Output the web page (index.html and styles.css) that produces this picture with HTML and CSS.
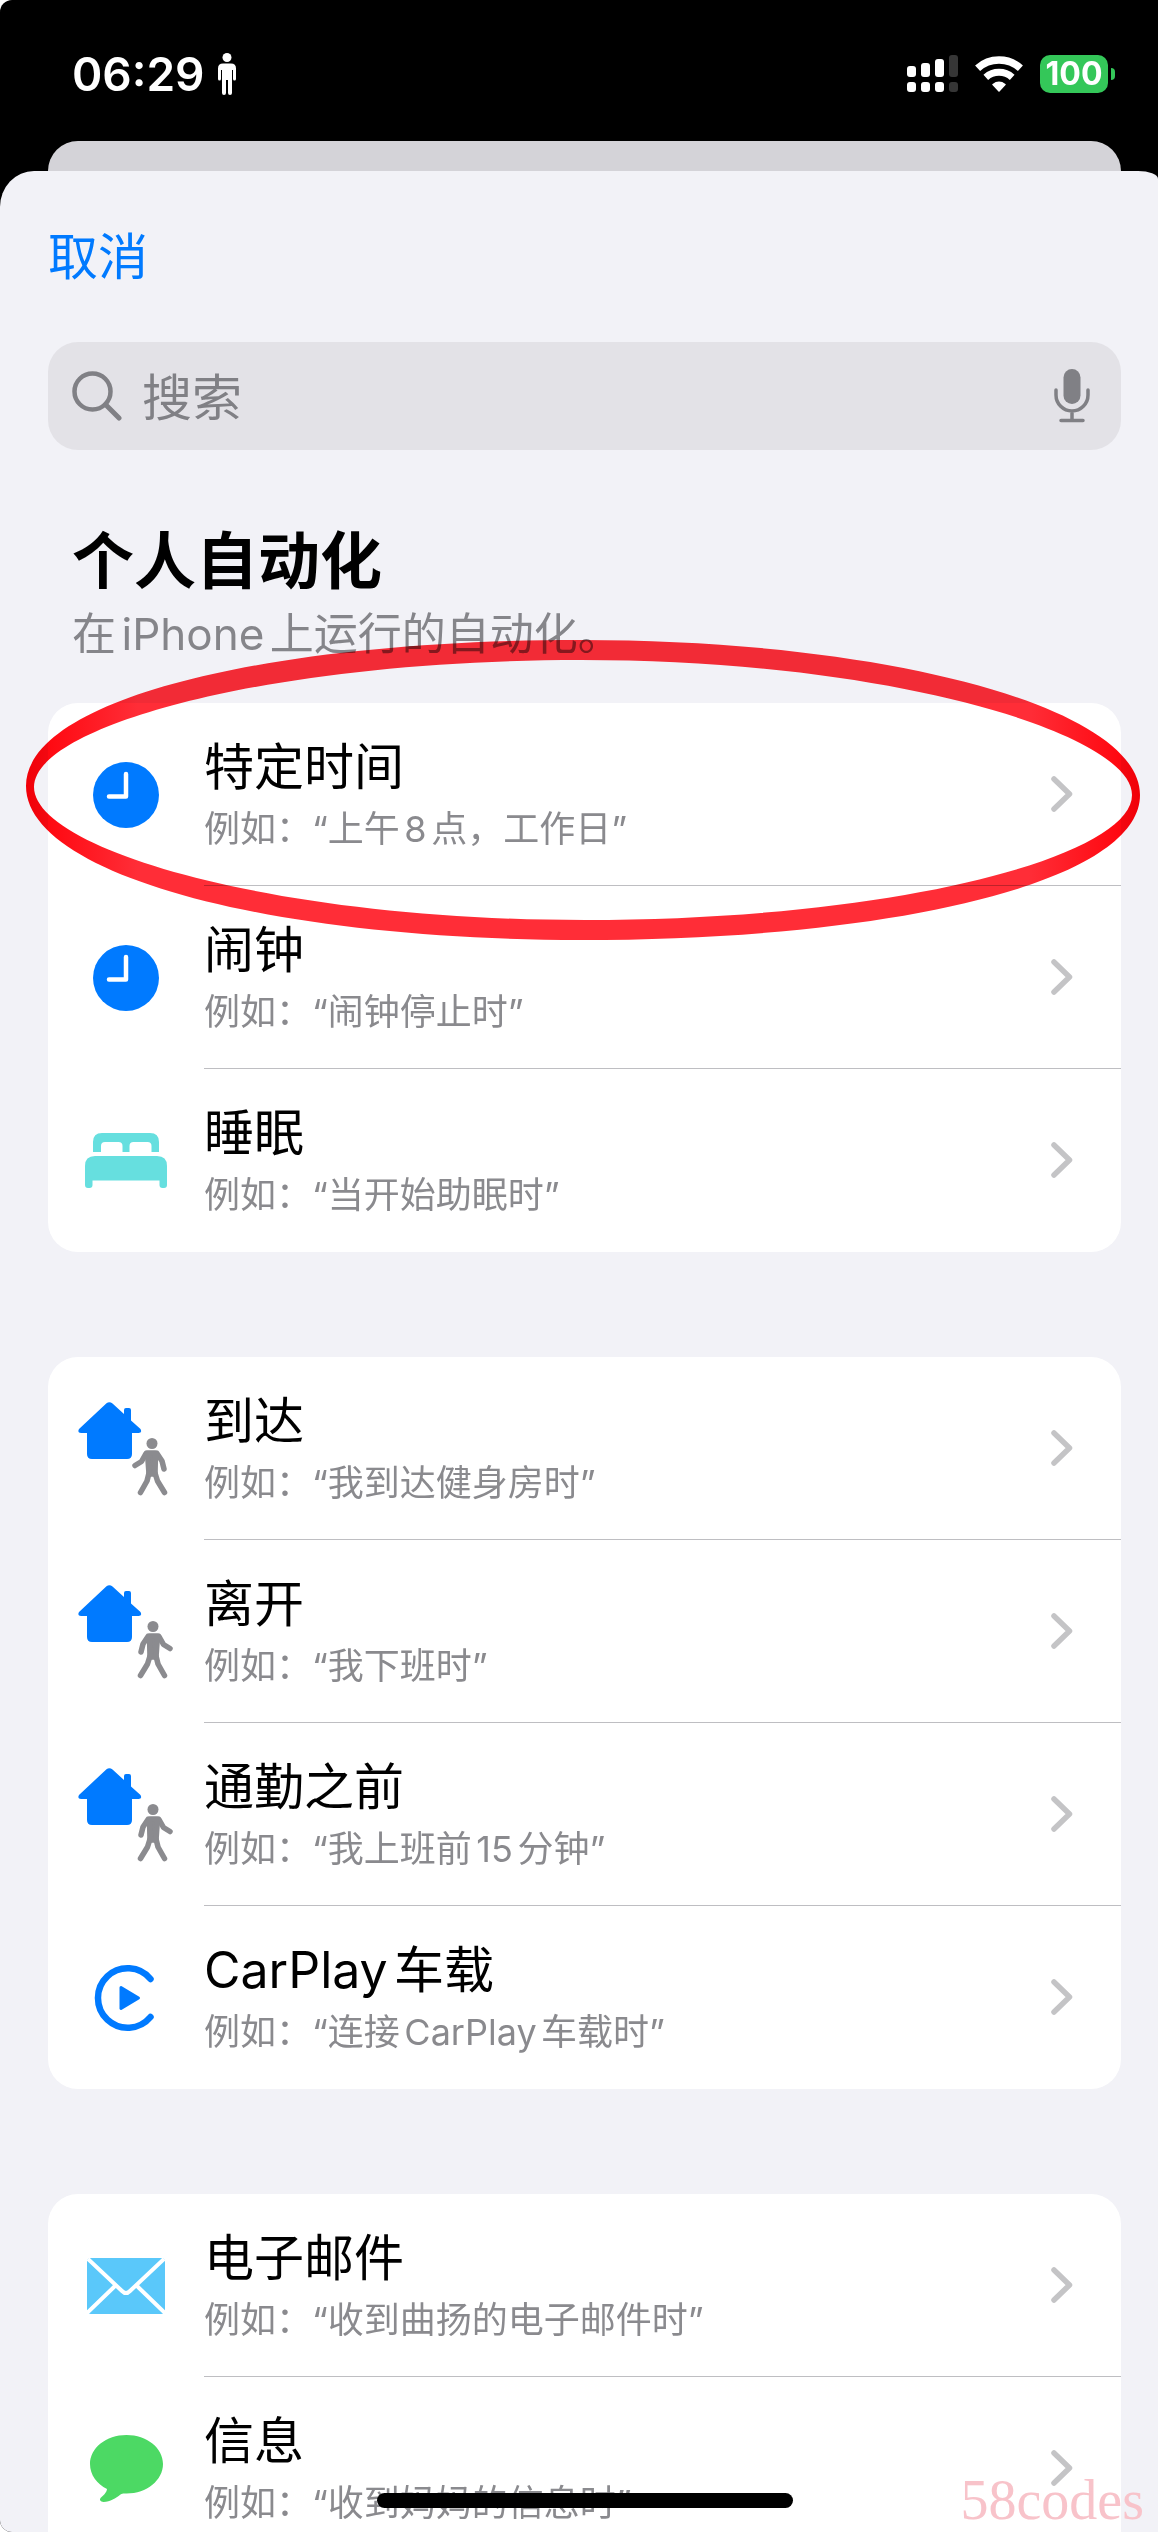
FILE: index.html
```html
<!DOCTYPE html>
<html lang="zh-CN">
<head>
<meta charset="utf-8">
<meta name="viewport" content="width=device-width">
<title>个人自动化</title>
<link rel="stylesheet" href="styles.css">
</head>
<body>
<svg class="defs" aria-hidden="true">
  <symbol id="clock" viewBox="0 0 66 66"><circle cx="33" cy="33" r="33" fill="#007aff"/><path d="M33 12v22.500H16" fill="none" stroke="#fff" stroke-width="4.500" stroke-linecap="round" stroke-linejoin="round"/></symbol>
  <symbol id="bed" viewBox="0 0 82 55"><path fill="#66dfdf" d="M8 19V9q0-9 9-9h48q9 0 9 9v10h-7.500v-6q0-4-4-4H48.500q-4 0-4 4v6h-7v-6q0-4-4-4H20q-4 0-4 4v6zM0 33q0-10 10-10h62q10 0 10 10v19q0 3-3 3h-1.500q-3 0-3-3v-4.500h-67V52q0 3-3 3H3q-3 0-3-3z"/></symbol>
  <symbol id="house" viewBox="0 0 64 58"><path fill="#007aff" d="M28.500 1.200q3-2.200 6 .3L46 12V8q0-2 2-2h3q2 0 2 2v10.500l9.500 8.500q2 4-2 4H54v21q0 5-5 5H14q-5 0-5-5V31H3q-4 0-2-4z"/></symbol>
  <symbol id="walker" viewBox="0 0 36 58"><g fill="none" stroke="#8b8b8f" stroke-width="5.500" stroke-linecap="round" stroke-linejoin="round"><path d="M14 15.500l-4.500 8L3 27.500M25 15.500l5 7.500 2 8M17 35l-2 8-6.500 11.500M23 35l2.500 8 7 11.500"/><path d="M15.500 15h8l-.5 21h-6z" fill="#8b8b8f"/></g><circle cx="20" cy="5.500" r="5.500" fill="#8b8b8f"/></symbol>
  <symbol id="carplay" viewBox="0 0 66 66"><path d="M57.500 14A29.700 29.700 0 1 0 57.500 52" fill="none" stroke="#007aff" stroke-width="6.500" stroke-linecap="round"/><path d="M28 22.500l17.500 10.500L28 43.500z" fill="#007aff" stroke="#007aff" stroke-width="3" stroke-linejoin="round"/></symbol>
  <symbol id="mail" viewBox="0 0 78 56"><rect width="78" height="56" rx="4" fill="#5ac8fa"/><path d="M1 1l34 32q4 4 8 0L77 1M0 55l28-27M78 55L50 28" fill="none" stroke="#fff" stroke-width="4"/></symbol>
  <symbol id="bubble" viewBox="0 0 73 67"><path fill="#4cd964" d="M36.500 0C57 0 73 13 73 29S57 58.500 36.500 58.500c-2 0-4-.5-6 1-5 4-10 7-17 7.500q-5-1-3-4c3-3 6-5 6.500-9C7 49 0 40 0 29 0 13 16 0 36.500 0z"/></symbol>
  <symbol id="chevron" viewBox="0 0 22 36"><path d="M3 3l15.500 15L3 33" fill="none" stroke="#c4c4c6" stroke-width="5.500" stroke-linecap="round" stroke-linejoin="round"/></symbol>
</svg>

<div class="phone">
  <header class="status">
    <div class="status-side">
      <time class="clock-text">06:29</time>
      <svg width="20" height="42" viewBox="0 0 20 42" fill="#fff" aria-hidden="true"><circle cx="10" cy="4.500" r="4.500"/><path d="M6 10.500h8q5 0 5 5V26q0 1.500-1.500 1.500T16 26v-9h-1v23q0 2-2 2t-2-2V27H9v13q0 2-2 2t-2-2V17H4v9q0 1.500-1.500 1.500T1 26V15.500q0-5 5-5z"/></svg>
    </div>
    <div class="status-side status-right">
      <svg width="51" height="38" viewBox="0 0 51 38" fill="#fff" aria-hidden="true"><rect y="11" width="9" height="11" rx="3"/><rect x="14" y="8" width="9" height="14" rx="3"/><rect x="28" y="4" width="9" height="18" rx="3"/><rect y="27" width="9" height="10" rx="3"/><rect x="14" y="27" width="9" height="10" rx="3"/><rect x="28" y="27" width="9" height="10" rx="3"/><g fill="#363636"><rect x="42" width="9" height="22" rx="3"/><rect x="42" y="27" width="9" height="10" rx="3"/></g></svg>
      <svg width="48" height="36" viewBox="0 0 48 36" aria-hidden="true"><g fill="none" stroke="#fff"><path d="M2.600 12.200a32 32 0 0 1 42.800 0" stroke-width="7.500"/><path d="M10.800 21.400a19.700 19.700 0 0 1 26.400 0" stroke-width="7"/></g><path d="M24 35l-6-6.500q6-4.500 12 0z" fill="#fff" stroke="#fff" stroke-width="1.500" stroke-linejoin="round"/></svg>
      <div class="battery"><span class="battery-level">100</span><span class="battery-tip"></span></div>
    </div>
  </header>
  <div class="sheet-behind"></div>

  <main class="sheet">
    <nav class="toolbar"><button class="cancel" type="button">取消</button></nav>
    <label class="search">
      <svg width="50" height="50" viewBox="0 0 50 50" fill="none" stroke="#808085" stroke-width="4.500" stroke-linecap="round" aria-hidden="true"><circle cx="20.500" cy="20.500" r="18"/><path d="M33.500 33.500L47 47" stroke-width="5"/></svg>
      <input class="search-input" type="search" placeholder="搜索" aria-label="搜索">
      <svg width="36" height="54" viewBox="0 0 36 54" fill="none" stroke="#808085" stroke-width="3.500" stroke-linecap="round" aria-hidden="true"><rect x="9.500" y="0" width="17" height="35" rx="8.500" fill="#808085" stroke="none"/><path d="M2 21v5a16 16 0 0 0 32 0v-5M18 42v9M7 51.500h22"/></svg>
    </label>

    <div class="heading">
      <h1 class="title">个人自动化</h1>
      <p class="subtitle">在iPhone上运行的自动化。</p>
    </div>

    <div class="groups">
      <div class="group">
        <ul class="card">
          <li><a class="row" href="#"><span class="icon"><svg width="66" height="66"><use href="#clock"/></svg></span><span class="body"><span class="text"><span class="name">特定时间</span><span class="hint">例如：“上午8点，工作日”</span></span><svg class="chevron" width="22" height="36"><use href="#chevron"/></svg></span></a></li>
          <li><a class="row" href="#"><span class="icon"><svg width="66" height="66"><use href="#clock"/></svg></span><span class="body"><span class="text"><span class="name">闹钟</span><span class="hint">例如：“闹钟停止时”</span></span><svg class="chevron" width="22" height="36"><use href="#chevron"/></svg></span></a></li>
          <li><a class="row" href="#"><span class="icon"><svg width="82" height="55"><use href="#bed"/></svg></span><span class="body"><span class="text"><span class="name">睡眠</span><span class="hint">例如：“当开始助眠时”</span></span><svg class="chevron" width="22" height="36"><use href="#chevron"/></svg></span></a></li>
        </ul>
        <svg class="marker" viewBox="0 0 1114 300" preserveAspectRatio="none" aria-hidden="true">
          <defs><linearGradient id="ink"><stop offset="0" stop-color="#ff0008"/><stop offset=".1" stop-color="#ff2d37"/><stop offset=".9" stop-color="#ff2d37"/><stop offset="1" stop-color="#ff0008"/></linearGradient></defs>
          <path fill="url(#ink)" fill-rule="evenodd" d="M0 146C0 58 246 0 555 0s559 68 559 155-246 145-559 145S0 234 0 146zM8 147c0 62 238 133 551 133s547-64 547-125S866 20 555 20 8 86 8 147z"/>
        </svg>
      </div>

      <ul class="card">
        <li><a class="row" href="#"><span class="icon"><svg width="96" height="94"><use href="#house" width="64" height="58"/><use href="#walker" x="54" y="36" width="36" height="58"/></svg></span><span class="body"><span class="text"><span class="name">到达</span><span class="hint">例如：“我到达健身房时”</span></span><svg class="chevron" width="22" height="36"><use href="#chevron"/></svg></span></a></li>
        <li><a class="row" href="#"><span class="icon"><svg width="96" height="94"><use href="#house" width="64" height="58"/><g transform="matrix(-1 0 0 1 149 0)"><use href="#walker" x="54" y="36" width="36" height="58"/></g></svg></span><span class="body"><span class="text"><span class="name">离开</span><span class="hint">例如：“我下班时”</span></span><svg class="chevron" width="22" height="36"><use href="#chevron"/></svg></span></a></li>
        <li><a class="row" href="#"><span class="icon"><svg width="96" height="94"><use href="#house" width="64" height="58"/><g transform="matrix(-1 0 0 1 149 0)"><use href="#walker" x="54" y="36" width="36" height="58"/></g></svg></span><span class="body"><span class="text"><span class="name">通勤之前</span><span class="hint">例如：“我上班前15分钟”</span></span><svg class="chevron" width="22" height="36"><use href="#chevron"/></svg></span></a></li>
        <li><a class="row" href="#"><span class="icon"><svg width="66" height="66"><use href="#carplay"/></svg></span><span class="body"><span class="text"><span class="name">CarPlay车载</span><span class="hint">例如：“连接CarPlay车载时”</span></span><svg class="chevron" width="22" height="36"><use href="#chevron"/></svg></span></a></li>
      </ul>

      <ul class="card">
        <li><a class="row" href="#"><span class="icon"><svg width="78" height="56"><use href="#mail"/></svg></span><span class="body"><span class="text"><span class="name">电子邮件</span><span class="hint">例如：“收到曲扬的电子邮件时”</span></span><svg class="chevron" width="22" height="36"><use href="#chevron"/></svg></span></a></li>
        <li><a class="row" href="#"><span class="icon"><svg width="73" height="67"><use href="#bubble"/></svg></span><span class="body"><span class="text"><span class="name">信息</span><span class="hint">例如：“收到妈妈的信息时”</span></span><svg class="chevron" width="22" height="36"><use href="#chevron"/></svg></span></a></li>
      </ul>
    </div>
  </main>

  <div class="home-area"><div class="home-indicator"></div></div>
  <div class="watermark">58codes</div>
</div>
</body>
</html>
```
FILE: styles.css
```css
* {
  box-sizing: border-box;
}

body {
  margin: 0;
  background: #fff;
  font-family: Inter, "Noto Sans CJK SC", sans-serif;
  text-autospace: normal;
  color: #000;
}

.defs {
  position: absolute;
  width: 0;
  height: 0;
}

svg {
  display: block;
  flex: none;
}

.phone {
  position: relative;
  display: flex;
  flex-direction: column;
  height: 100vh;
  overflow: hidden;
  background: #000;
  border-radius: 12px 0 0 12px;
}

/* Status bar */
.status {
  flex: none;
  display: flex;
  justify-content: space-between;
  align-items: center;
  padding: 46px 43px 39px 72px;
  color: #fff;
}

.status-side {
  display: flex;
  align-items: center;
  gap: 12px;
}

.status-right {
  gap: 17px;
}

.clock-text {
  font-size: 46px;
  line-height: 56px;
  font-weight: 600;
}

.battery {
  display: flex;
  align-items: center;
  gap: 3px;
}

.battery-level {
  width: 68px;
  border-radius: 10px;
  background: #34c759;
  font-size: 32px;
  line-height: 38px;
  font-weight: 700;
  text-align: center;
}

.battery-tip {
  width: 4px;
  height: 12px;
  border-radius: 0 4px 4px 0;
  background: #34c759;
}

/* Stacked sheets */
.sheet-behind {
  flex: none;
  height: 30px;
  margin: 0 37px 0 48px;
  border-radius: 30px 30px 0 0;
  background: #d4d3d8;
}

.sheet {
  flex: 1;
  min-height: 0;
  overflow: hidden;
  padding: 0 37px 0 48px;
  border-radius: 34px 20px 0 0 / 36px 8px 0 0;
  background: #f2f2f7;
}

.toolbar {
  padding: 54px 0 53px;
}

.cancel {
  display: block;
  padding: 0;
  border: 0;
  background: none;
  font: inherit;
  font-size: 50px;
  line-height: 64px;
  color: #007aff;
}

.search {
  display: flex;
  align-items: center;
  gap: 20px;
  height: 108px;
  padding: 0 31px 0 24px;
  border-radius: 30px;
  background: #e3e2e7;
}

.search-input {
  flex: 1;
  min-width: 0;
  padding: 4px 0 0;
  border: 0;
  outline: 0;
  background: none;
  font: inherit;
  font-size: 50px;
  line-height: 64px;
}

.search-input::placeholder {
  color: #808085;
  opacity: 1;
}

.heading {
  padding: 76px 24px 41px;
}

.title {
  margin: 0 0 8px;
  font-size: 62px;
  line-height: 72px;
  font-weight: 700;
}

.subtitle {
  margin: 0;
  font-size: 44px;
  line-height: 56px;
  color: #85858a;
}

/* Grouped list */
.groups {
  display: flex;
  flex-direction: column;
  gap: 105px;
}

.group {
  position: relative;
}

.card {
  margin: 0;
  padding: 0;
  list-style: none;
  border-radius: 30px;
  background: #fff;
}

.row {
  display: flex;
  color: inherit;
  text-decoration: none;
}

.icon {
  flex: none;
  display: flex;
  align-items: center;
  justify-content: center;
  width: 156px;
}

.body {
  flex: 1;
  display: flex;
  align-items: center;
  justify-content: space-between;
  padding: 32px 48px 32px 0;
  border-bottom: 1px solid #bebec2;
}

.card li:last-child .body {
  border-bottom-color: transparent;
}

.text {
  display: flex;
  flex-direction: column;
  gap: 6px;
}

.name {
  font-size: 50px;
  line-height: 64px;
}

.hint {
  font-size: 36px;
  line-height: 48px;
  color: #8a8a8e;
}

/* Hand-drawn ring round the first row */
.marker {
  position: absolute;
  top: -63px;
  left: -22px;
  width: calc(100% + 41px);
  height: 300px;
  mix-blend-mode: multiply;
  pointer-events: none;
}

.home-area {
  position: absolute;
  right: 37px;
  bottom: 24px;
  left: 48px;
  display: flex;
  justify-content: center;
}

.home-indicator {
  width: 416px;
  height: 15px;
  border-radius: 8px;
  background: #000;
}

.watermark {
  position: absolute;
  right: 14px;
  bottom: 0;
  font-family: "Liberation Serif", serif;
  font-size: 56px;
  line-height: 64px;
  color: #f8c3ca;
}
```
